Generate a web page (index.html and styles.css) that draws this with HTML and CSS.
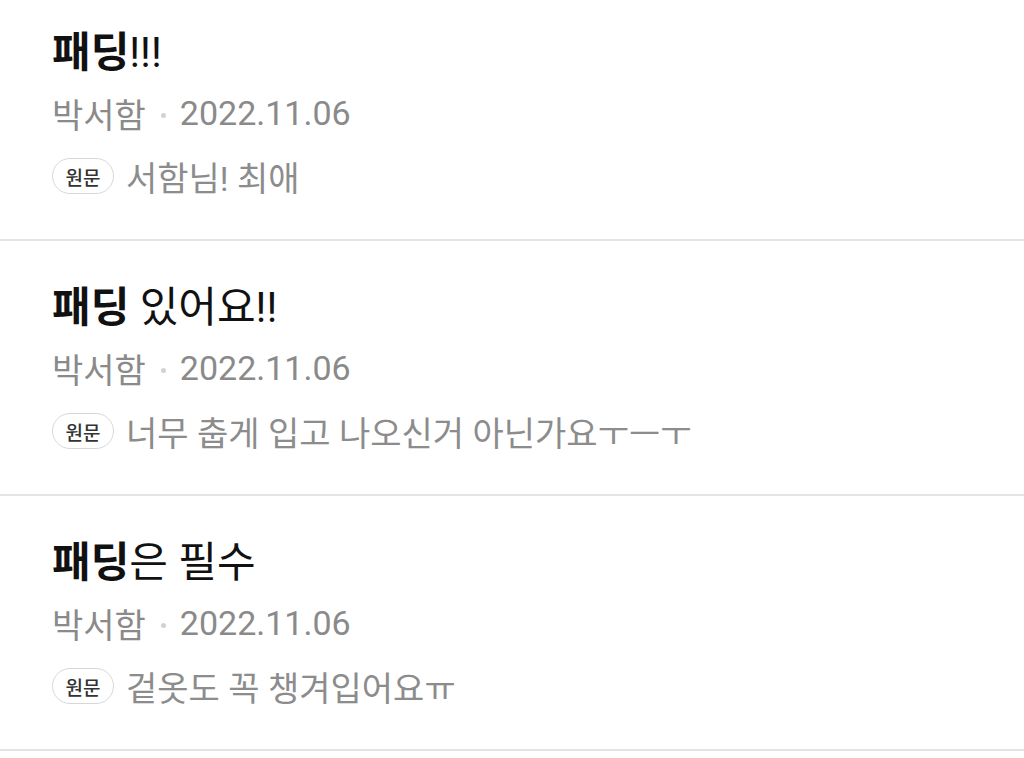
FILE: index.html
```html
<!DOCTYPE html>
<html lang="ko">
<head>
    <meta charset="UTF-8">
    <meta name="viewport" content="width=device-width, initial-scale=1.0">
    <title>검색 결과</title>
    <link rel="stylesheet" href="styles.css">
</head>
<body>
    <ul class="result-list">
        <li class="result">
            <h2 class="result-title"><b>패딩</b>!!!</h2>
            <div class="result-meta">
                <span class="author">박서함</span>
                <span class="sep"></span>
                <span class="date">2022.11.06</span>
            </div>
            <div class="result-body">
                <span class="badge">원문</span>
                <span class="excerpt">서함님! 최애</span>
            </div>
        </li>
        <li class="result">
            <h2 class="result-title"><b>패딩</b> 있어요!!</h2>
            <div class="result-meta">
                <span class="author">박서함</span>
                <span class="sep"></span>
                <span class="date">2022.11.06</span>
            </div>
            <div class="result-body">
                <span class="badge">원문</span>
                <span class="excerpt">너무 춥게 입고 나오신거 아닌가요ㅜㅡㅜ</span>
            </div>
        </li>
        <li class="result">
            <h2 class="result-title"><b>패딩</b>은 필수</h2>
            <div class="result-meta">
                <span class="author">박서함</span>
                <span class="sep"></span>
                <span class="date">2022.11.06</span>
            </div>
            <div class="result-body">
                <span class="badge">원문</span>
                <span class="excerpt">겉옷도 꼭 챙겨입어요ㅠ</span>
            </div>
        </li>
    </ul>
</body>
</html>
```

FILE: styles.css
```css
body {
    margin: 0;
    background-color: #ffffff;
    font-family: Roboto, "Noto Sans CJK KR", sans-serif;
    overflow: hidden;
}
.result-list {
    list-style: none;
    margin: -14px 0 0 0;
    padding: 0;
}
.result {
    padding: 37px 52px 30px;
    border-bottom: 2px solid #e4e4e4;
}
.result-title {
    margin: 0;
    height: 60px;
    line-height: 60px;
    font-size: 42px;
    font-weight: normal;
    color: #111111;
}
.result-title b {
    font-weight: bold;
}
.result-meta {
    display: flex;
    align-items: center;
    height: 60px;
    font-size: 34px;
    color: #8a8a8a;
}
.sep {
    width: 5px;
    height: 5px;
    margin: 4px 14px 0 15px;
    border-radius: 50%;
    background-color: #d2d2d2;
}
.result-body {
    display: flex;
    align-items: center;
    height: 66px;
}
.badge {
    display: flex;
    align-items: center;
    justify-content: center;
    width: 62px;
    height: 36px;
    box-sizing: border-box;
    border: 1px solid #d8d8d8;
    border-radius: 18px;
    font-size: 19px;
    font-weight: 500;
    color: #333333;
}
.excerpt {
    margin-left: 12px;
    font-size: 34px;
    color: #8c8c8c;
}
```
